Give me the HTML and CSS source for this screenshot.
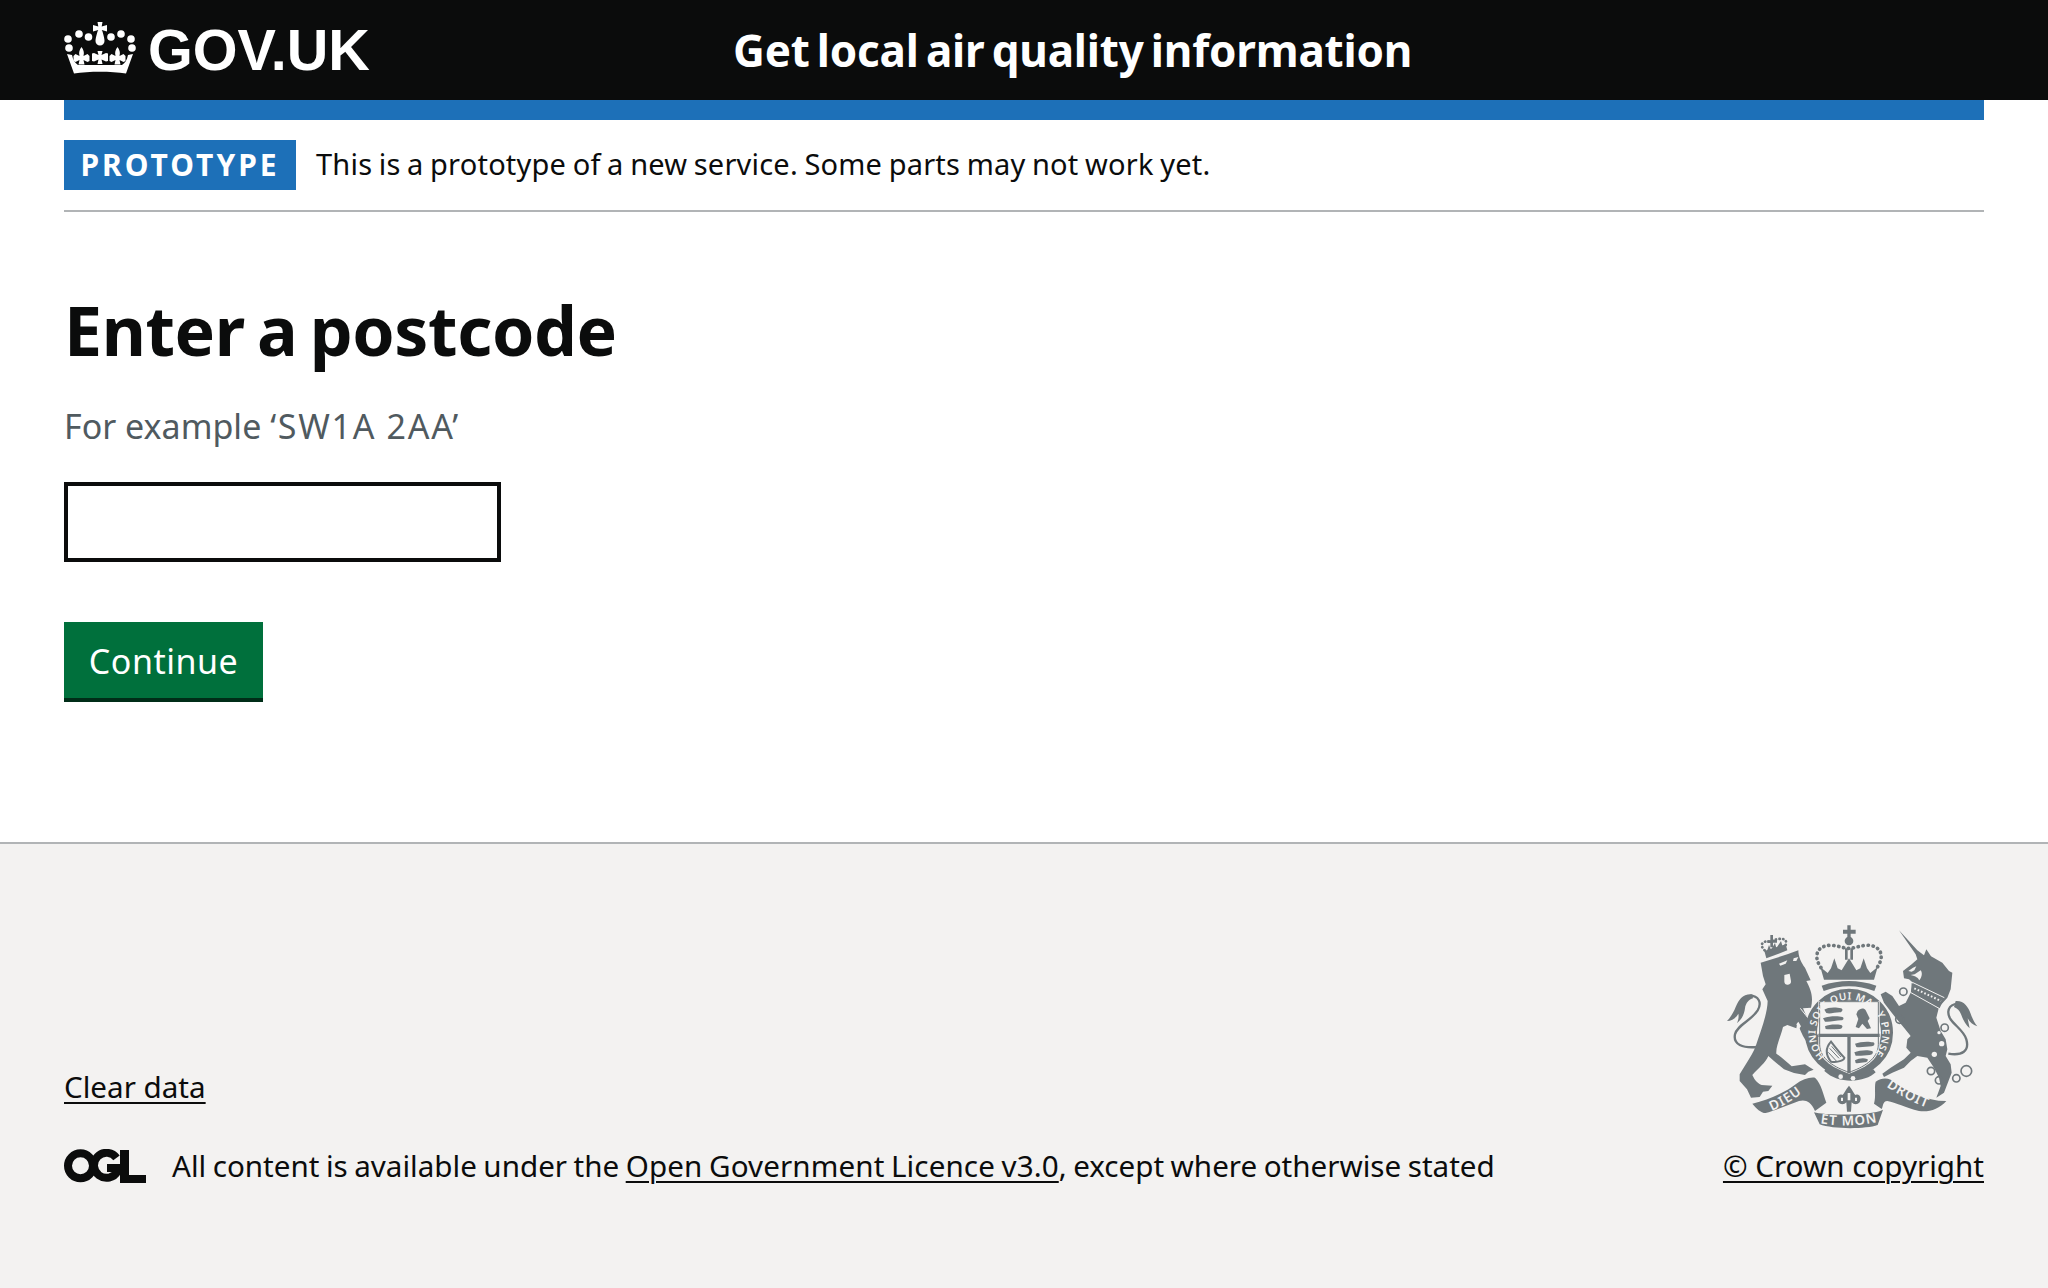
FILE: index.html
```html
<!DOCTYPE html>
<html lang="en">
<head>
<meta charset="utf-8">
<title>Get local air quality information</title>
<link rel="stylesheet" href="styles.css">
</head>
<body>
<header class="site-header">
  <a class="logo" href="#">
    <svg class="crown" viewBox="0 0 72 52" aria-hidden="true">
      <g fill="#fff">
        <circle cx="5" cy="26" r="3.800"/><circle cx="4" cy="17" r="3.800"/><circle cx="15" cy="12" r="3.800"/><circle cx="24.500" cy="15" r="3.800"/><circle cx="47" cy="15" r="3.800"/><circle cx="57" cy="12" r="3.800"/><circle cx="67" cy="17" r="3.800"/><circle cx="68" cy="26" r="3.800"/>
        <path d="M33.500 0h5l-.8 4.500 5.300-1.500v6.500l-5.300-1.500.8 1.500c1.500 5 2 8 2 9.500a4.500 4.500 0 0 1-9 0c0-1.500.5-4.500 2-9.500l.8-1.500-5.300 1.500V3l5.300 1.500z"/>
        <path d="M33.500 29h5l-1 4 4.500-2 2 .5v7.500l-2 .5-4.500-2 1 4.500h-5l1-4.500-4.500 2-2-.5v-7.500l2-.5 4.500 2z"/>
        <path d="M17.500 25c2 3 3 5 2 9l4-2 2 2v5l-2 1-4-2 1 4.500h-6l1-4.500-4 2-2-1v-5l2-2 4 2c-1-4 0-6 2-9z"/>
        <path d="M53.500 25c2 3 3 5 2 9l4-2 2 2v5l-2 1-4-2 1 4.500h-6l1-4.500-4 2-2-1v-5l2-2 4 2c-1-4 0-6 2-9z"/>
        <path d="M3 32l5 1c1 5 3 8 6 10h44c3-2 5-5 6-10l5-1-7 19.500c-15-2.500-37-2.500-52 0z"/>
      </g>
    </svg>
    <span class="logo-text">GOV.UK</span>
  </a>
  <a class="service-name" href="#">Get local air quality information</a>
</header>

<div class="width-container">
  <div class="phase-bar"></div>
  <div class="phase-banner">
    <strong class="tag">PROTOTYPE</strong>
    <span class="phase-text">This is a prototype of a new service. Some parts may not work yet.</span>
  </div>
  <main class="main">
    <h1 class="heading">Enter a postcode</h1>
    <p class="hint">For example <span class="hint-code">‘SW1A 2AA’</span></p>
    <input class="input" type="text" aria-label="Enter a postcode">
    <button class="button" type="button">Continue</button>
  </main>
</div>

<footer class="footer">
  <div class="footer-inner">
    <div class="footer-left">
      <a class="link clear" href="#">Clear data</a>
      <div class="licence">
        <svg class="ogl" viewBox="0 0 82 34" aria-hidden="true">
          <g fill="none" stroke="#0b0c0c" stroke-width="8">
            <circle cx="16.500" cy="16.800" r="12.500"/>
            <path d="M52.500 8.800a12.500 12.500 0 1 0 1 13.500V19H43"/>
          </g>
          <path fill="#0b0c0c" d="M56 1h9v25h17v8H56z"/>
        </svg>
        <span class="licence-text">All content is available under the <a class="link licence-link" href="#">Open Government Licence v3.0</a>, except where otherwise stated</span>
      </div>
    </div>
    <div class="footer-right">
      <svg class="crest" viewBox="0 0 900 660" aria-hidden="true">
        <defs>
          <path id="garter" d="M379 436A100 100 0 1 1 521 436"/>
          <path id="dieu" d="M218 600Q280 574 334 526"/>
          <path id="etmon" d="M358 636Q450 652 540 632"/>
          <path id="droit" d="M562 526Q620 568 700 596"/>
        </defs>

        <!-- lion -->
        <g transform="translate(60 30)">
          <path class="ink" d="M125 125L205 100 238 88C238 105 246 125 258 140L275 178 262 180C275 205 284 225 276 260L252 262C262 290 280 310 298 345L308 372 290 388 268 372 252 345 245 330 235 305 232 322 205 312 192 318C186 345 170 375 172 398 190 410 205 425 218 436L258 430 284 446 268 452 258 462 225 456 195 445 165 420 148 405C140 425 115 445 100 462 108 480 118 488 128 492L160 494 148 510 132 512 122 528 96 530 84 505 62 480 62 460C80 430 105 395 112 370 125 330 145 280 146 240L130 205 140 190 132 165Z"/>
          <path class="ink-line" d="M115 378C70 382 42 370 48 340 54 312 96 300 116 268 130 244 118 224 92 224"/>
          <path class="ink" d="M100 220C70 218 60 236 50 258 44 274 34 290 24 300 38 300 50 292 58 278 60 288 58 298 54 306 68 296 76 280 78 262 80 246 90 236 102 232Z"/>
          <path class="bg" d="M180 128L205 118 200 128 184 134ZM224 112L238 108 232 120 222 120ZM196 162L212 158 216 180A10 10 0 0 1 196 182Z"/>
          <path class="ink" d="M136 90L200 70 205 88 142 112Z"/>
          <path class="ink" d="M145 58h9V42h8v15h12v8h-12v14h-8V66h-9z" />
          <path class="dots-line" d="M137 88C120 72 130 58 152 62 178 50 208 48 200 72"/>
          <path class="ink" d="M144 90l6-18 6 14 12-20 4 16 14-22 6 20z"/>
          <path class="bg-line" d="M244 262L276 302"/>
          <path class="bg" d="M232 310l6-8 8 14-6 8z"/>
        </g>

        <!-- unicorn -->
        <g transform="translate(450 30)">
          <path class="ink" d="M150 28L205 88 225 103 232 85 246 106 280 125 300 150 310 155 305 205 295 230 270 258 262 290 275 330 290 355 295 385 290 405 305 430 308 455 285 515 262 530 275 495 270 470 255 440 235 410 205 405 185 420 165 440 130 455 105 468 100 458 125 440 165 415 185 395 172 380 175 355 185 345 165 320 140 290 120 265 105 245 95 220 110 212 130 225 150 255 170 245 185 215 192 185 180 175 165 172 162 150 188 130 205 115 200 100Z"/>
          <path class="ink-line" d="M298 398C340 405 362 390 352 355 342 320 296 305 298 272 300 248 330 242 345 256"/>
          <path class="ink" d="M320 240C345 238 358 258 365 278 370 292 376 305 385 316 372 312 362 304 356 292 358 304 360 312 362 322 350 312 342 296 336 280 332 268 325 262 315 258Z"/>
          <path class="ink" d="M188 186L285 232 272 262 186 214Z"/>
          <path class="bg-line" d="M190 184L286 230M184 214L272 263"/>
          <path class="dash-line" d="M196 202L276 240"/>
          <path class="bg" d="M178 150l14-10 10-4-6 12-8 4zM185 162l12-2 18-12c6 8 4 20-4 30-4-8-10-12-26-16z"/>
          <circle class="ring" cx="163" cy="212" r="11"/><circle class="ring" cx="152" cy="295" r="12"/><circle class="ring" cx="287" cy="320" r="11"/><circle class="ring" cx="246" cy="450" r="11"/><circle class="ring" cx="270" cy="478" r="11"/><circle class="ring" cx="322" cy="472" r="11"/><circle class="ring" cx="352" cy="450" r="16"/>
          <circle class="bg" cx="278" cy="368" r="8"/><circle class="bg" cx="256" cy="400" r="8"/><circle class="bg" cx="270" cy="335" r="5"/>
        </g>

        <!-- royal crown -->
        <path class="ink" d="M432 56h13V43h10v13h15v12h-15v12h-10V68h-13z"/>
        <circle class="ink" cx="450" cy="90" r="13"/>
        <path class="ink" d="M438 112h8v34h-8zM454 112h8v34h-8z"/>
        <path class="dots-line big" d="M366 170C338 130 360 100 400 103 420 105 435 112 450 112 465 112 480 105 500 103 540 100 562 130 534 170"/>
        <path class="ink" d="M364 168L386 186 396 172 406 142 416 172 428 178 450 142 472 178 484 172 494 142 504 172 514 186 536 168 525 206H375Z"/>
        <path class="ink" d="M368 224Q450 196 532 224L526 240Q450 212 374 240Z"/>

        <!-- garter and shield -->
        <circle class="garter-ring" cx="450" cy="365" r="114"/>
        <path class="bg" d="M358 270H542V400C542 450 490 474 450 488 410 474 358 450 358 400Z"/>
        <path class="ink-thin" d="M362 272H538V400C538 446 490 470 450 484 410 470 362 446 362 400Z"/>
        <path class="ink" d="M358 368H542V378H455V486H445V378H358Z"/>
        <path class="ink" d="M376 296c10-8 36-8 50-4 8 2 4 12-4 12-14 0-30 6-40 2zM372 322c12-6 44-8 58-4 6 2 4 10-4 10-14 0-34 6-48 4zM378 346c12-6 34-6 48-4 8 2 4 12-4 12-14 0-30 2-42 0z"/>
        <path class="ink" d="M476 300c8-10 20-10 24-2l12 24-6 8 10 22-12 2-14-16-10 14-10-4 8-24-6-14z"/>
        <path class="ink" d="M468 398c14-6 40-8 54-4 8 2 4 12-4 12-14 0-32 4-46 2zM466 424c14-6 40-8 52-4 8 2 2 12-6 12-14 0-30 4-42 2zM468 448c10-6 26-8 36-4 6 2 0 10-6 10-10 0-20 4-28 2z"/>
        <path class="ink-thin thick" d="M396 392C380 410 378 430 396 452 420 456 436 446 436 440 420 424 410 410 396 392Z"/>
        <path class="hatch" d="M392 412L420 442M388 424L412 450M398 406L426 438"/>
        <path class="ink" d="M386 462C420 494 480 498 522 474L530 484C500 514 420 522 376 480Z"/>
        <circle class="bg" cx="425" cy="497" r="7"/><circle class="bg" cx="462" cy="502" r="7"/>

        <!-- scrolls -->
        <path class="ink" d="M160 578C210 568 265 540 290 520 310 505 330 498 348 500 368 520 372 548 382 575L348 600C335 570 318 565 300 570 265 582 225 600 200 606 185 606 172 592 160 578Z"/>
        <path class="ink" d="M345 604C380 614 520 614 552 596L536 642C500 655 400 655 362 640Z"/>
        <path class="ink" d="M530 512C545 502 560 500 575 506 620 540 680 570 742 570 720 595 690 604 660 600 620 590 590 575 565 570 550 570 552 590 548 594L525 578C532 555 525 530 530 512Z"/>
        <path class="ink" d="M450 524C462 538 464 548 470 552 480 546 490 560 482 574 476 582 464 582 458 574L456 602H444L442 574C436 582 424 582 418 574 410 560 420 546 430 552 436 548 438 538 450 524Z"/>
        <path class="bg" d="M446 546h8v22h-8zM426 560h6v10h-6zM468 560h6v10h-6z"/>

        <text class="crest-text garter-text"><textPath href="#garter">HONI SOIT QUI MAL Y PENSE</textPath></text>
        <text class="crest-text scroll-text"><textPath href="#dieu">DIEU</textPath></text>
        <text class="crest-text scroll-text"><textPath href="#etmon" startOffset="6">ET MON</textPath></text>
        <text class="crest-text scroll-text"><textPath href="#droit">DROIT</textPath></text>
      </svg>
      <a class="link copyright" href="#">© Crown copyright</a>
    </div>
  </div>
</footer>
</body>
</html>
```

FILE: styles.css
```css
* { box-sizing: border-box; }
html, body { margin: 0; padding: 0; }
body {
  min-height: 1288px;
  display: flex;
  flex-direction: column;
  background: #fff;
  color: #0b0c0c;
  font-family: "Noto Sans", "Liberation Sans", sans-serif;
}
a { color: inherit; text-decoration: none; }

.site-header {
  height: 100px;
  background: #0b0c0c;
  color: #fff;
  display: flex;
  align-items: center;
  padding-left: 64px;
}
.logo { display: flex; align-items: center; width: 669px; }
.crown { width: 72px; height: 52px; margin-top: -5px; flex: none; }
.logo-text {
  margin-left: 12px;
  font-family: "Liberation Sans", sans-serif;
  font-weight: 700;
  font-size: 57.6px;
  line-height: 100px;
}
.service-name {
  font-weight: 700;
  font-size: 44px;
  line-height: 98px;
  letter-spacing: -0.2px;
  word-spacing: -4px;
}

.width-container { margin: 0 64px; flex: none; }
.phase-bar { height: 20px; background: #1d70b8; }
.phase-banner {
  display: flex;
  align-items: center;
  padding: 20px 0;
  border-bottom: 2px solid #b1b4b6;
}
.tag {
  display: block;
  width: 232px;
  height: 50px;
  background: #1d70b8;
  color: #fff;
  font-size: 30px;
  line-height: 50px;
  font-weight: 700;
  text-align: center;
  letter-spacing: 3px;
}
.phase-text { margin: 0 0 2px 20px; font-size: 29px; line-height: 38px; letter-spacing: 0.2px; word-spacing: -1.2px; }

.main { display: flex; flex-direction: column; align-items: flex-start; height: 630px; }
.heading { margin: 74px 0 0; font-size: 68px; line-height: 88px; font-weight: 700; letter-spacing: -0.4px; word-spacing: -5px; }
.hint { margin: 30px 0 0; font-size: 34px; line-height: 44px; color: #505a5f; }
.hint-code { letter-spacing: 1.7px; }
.input { width: 437px; height: 80px; margin-top: 34px; border: 4px solid #0b0c0c; background: #fff; border-radius: 0; padding: 6px; }
.button {
  width: 199px;
  height: 80px;
  margin-top: 60px;
  padding: 2px 0 0;
  border: 0;
  border-bottom: 4px solid #002d18;
  background: #00703c;
  color: #fff;
  font-family: inherit;
  font-size: 34px;
  letter-spacing: 0.5px;
  border-radius: 0;
}

.footer {
  flex: 1;
  background: #f3f2f1;
  border-top: 2px solid #b1b4b6;
}
.footer-inner {
  display: flex;
  justify-content: space-between;
  align-items: flex-end;
  margin: 0 64px;
  padding: 67px 0 84px;
}
.footer-left { display: flex; flex-direction: column; align-items: flex-start; gap: 39px; }
.link { text-decoration: underline; text-underline-offset: 4px; text-decoration-thickness: 2px; }
.clear { font-size: 29.6px; line-height: 40px; }
.licence { display: flex; align-items: center; }
.ogl { width: 82px; height: 34px; flex: none; }
.licence-text { margin-left: 26px; font-size: 29.6px; line-height: 40px; word-spacing: -1.2px; }
.licence-link { letter-spacing: 0.1px; }
.footer-right { display: flex; flex-direction: column; align-items: flex-end; }
.crest { width: 300px; height: 220px; margin: 0 -15px 15px 0; }
.copyright { font-size: 29.6px; line-height: 40px; }

.ink { fill: #6f777b; }
.bg { fill: #f3f2f1; }
.ink-line { fill: none; stroke: #6f777b; stroke-width: 7; }
.bg-line { fill: none; stroke: #f3f2f1; stroke-width: 3; }
.dash-line { fill: none; stroke: #f3f2f1; stroke-width: 6; stroke-dasharray: 5 6; }
.ink-thin { fill: none; stroke: #6f777b; stroke-width: 3; }
.ink-thin.thick { stroke-width: 6; }
.hatch { fill: none; stroke: #6f777b; stroke-width: 3; }
.dots-line { fill: none; stroke: #6f777b; stroke-width: 8; stroke-linecap: round; stroke-dasharray: 1 10; }
.dots-line.big { stroke-width: 11; stroke-dasharray: 1 14; }
.ring { fill: none; stroke: #6f777b; stroke-width: 5; }
.garter-ring { fill: none; stroke: #6f777b; stroke-width: 36; }
.crest-text { fill: #f3f2f1; font-family: "Noto Sans", sans-serif; font-weight: 600; }
.garter-text { font-size: 30px; letter-spacing: 1.6px; }
.scroll-text { font-size: 40px; letter-spacing: 3px; }
```
